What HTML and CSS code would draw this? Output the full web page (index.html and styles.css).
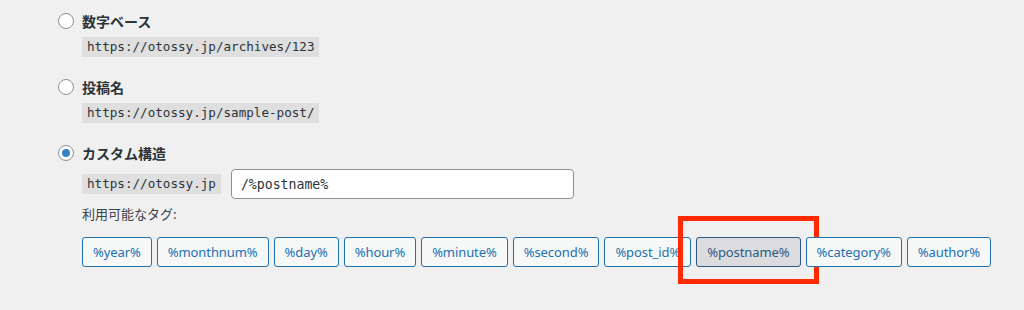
FILE: index.html
```html
<!DOCTYPE html>
<html lang="ja">
<head>
  <meta charset="UTF-8">
  <meta name="viewport" content="width=device-width, initial-scale=1.0">
  <title>パーマリンク設定</title>
  <link rel="stylesheet" href="styles.css">
</head>
<body>

  <fieldset class="structure">
    <div class="option">
      <label class="choice"><input type="radio" name="selection"> 数字ベース</label>
      <code class="sample">https://otossy.jp/archives/123</code>
    </div>

    <div class="option">
      <label class="choice"><input type="radio" name="selection"> 投稿名</label>
      <code class="sample">https://otossy.jp/sample-post/</code>
    </div>

    <div class="option custom">
      <label class="choice"><input type="radio" name="selection" checked> カスタム構造</label>
      <div class="custom-row">
        <code class="sample">https://otossy.jp</code>
        <input class="code-input" type="text" value="/%postname%">
      </div>
      <div class="tags">
        <p class="tags-title">利用可能なタグ:</p>
        <ul class="tag-list">
          <li><button class="tag">%year%</button></li>
          <li><button class="tag">%monthnum%</button></li>
          <li><button class="tag">%day%</button></li>
          <li><button class="tag">%hour%</button></li>
          <li><button class="tag">%minute%</button></li>
          <li><button class="tag">%second%</button></li>
          <li><button class="tag">%post_id%</button></li>
          <li class="marked"><button class="tag active">%postname%</button><span class="highlight"></span></li>
          <li><button class="tag">%category%</button></li>
          <li><button class="tag">%author%</button></li>
        </ul>
      </div>
    </div>
  </fieldset>

</body>
</html>
```

FILE: styles.css
```css
body {
  background-color: #f0f0f1;
  color: #1d2327;
  margin: 0px;
  font-family: 'Noto Sans', 'Noto Sans CJK JP', sans-serif;
  font-size: 13px;
}

.structure {
  border: none;
  margin: 0;
  padding: 11px 0 0 58px;
}

.option { margin-bottom: 20px; }

.choice {
  display: flex;
  align-items: center;
  height: 20px;
  font-family: 'Noto Sans CJK JP', sans-serif;
  font-size: 14px;
  font-weight: bold;
  color: #2c3338;
}

.choice input {
  appearance: none;
  width: 16px;
  height: 16px;
  margin: 0 8px 0 0;
  border: 1px solid #8c8f94;
  border-radius: 50%;
  background: #fff;
  display: grid;
  place-items: center;
}

.choice input:checked::before {
  content: '';
  width: 8px;
  height: 8px;
  border-radius: 50%;
  background: #3582c4;
}

.sample {
  display: inline-block;
  margin: 6px 0 0 24px;
  padding: 0 5px;
  height: 20px;
  line-height: 20px;
  background: rgba(0, 0, 0, 0.07);
  font-family: 'DejaVu Sans Mono', monospace;
  font-size: 12.6px;
  color: #2c3338;
}

.custom-row {
  display: flex;
  align-items: center;
  margin: 6px 0 0 24px;
}

.custom-row .sample { margin: 0 10px 0 0; }

.code-input {
  box-sizing: border-box;
  width: 343px;
  height: 30px;
  padding: 0 9px;
  border: 1px solid #8c8f94;
  border-radius: 4px;
  background: #fff;
  font-family: 'DejaVu Sans Mono', monospace;
  font-size: 13.2px;
  color: #2c3338;
}

.tags { margin: 5px 0 0 24px; }

.tags-title {
  margin: 0;
  line-height: 20px;
  font-family: 'Noto Sans CJK JP', sans-serif;
  color: #3c434a;
}

.tag-list {
  list-style: none;
  display: flex;
  gap: 5px;
  margin: 13px 0 0 0;
  padding: 0;
}

.tag-list li { position: relative; }

.tag {
  height: 30px;
  padding: 0 10px;
  border: 1px solid #2271b1;
  border-radius: 3px;
  background: #f6f7f7;
  color: #2271b1;
  font-family: 'Noto Sans', sans-serif;
  font-size: 13px;
  letter-spacing: -0.08px;
  cursor: pointer;
}

.tag.active {
  background: #dcdcde;
  border-color: #2c5a85;
  color: #2c5a85;
}

.highlight {
  position: absolute;
  top: -21px;
  bottom: -17px;
  left: -18px;
  right: -18px;
  border: 5px solid #ff2a00;
  pointer-events: none;
}
```
